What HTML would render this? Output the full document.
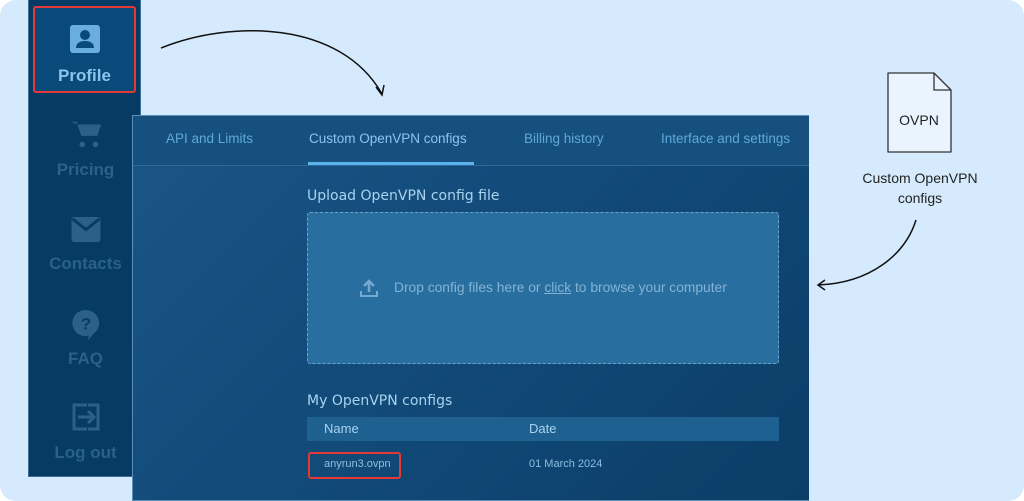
<!DOCTYPE html>
<html><head><meta charset="utf-8"><style>
*{margin:0;padding:0;box-sizing:border-box}
body{width:1024px;height:501px;overflow:hidden;background:#fff;font-family:"Liberation Sans",sans-serif;position:relative}
.bg{position:absolute;left:0;top:0;width:1024px;height:501px;background:#d5ebfd;border-radius:16px}
.side{position:absolute;left:28px;top:0;width:113px;height:477px;background:#053b64;border:1px solid #3b6f95;border-top:none}
.ic{position:absolute;left:0;width:113px}
.ic svg{display:block;margin:0 auto}
.lb{position:absolute;left:0;width:113px;text-align:center;font-weight:bold;font-size:17px;color:#2b6189;line-height:20px}
.prof{position:absolute;left:33px;top:6px;width:103px;height:87px;background:#0a4a7a;border:2px solid #e53935;border-radius:3px}
.panel{position:absolute;left:132px;top:115px;width:677px;height:386px;background:linear-gradient(135deg,#1b5687 0%,#134c7b 40%,#0b3e68 100%);border:1px solid #5d90b8;border-right:none}
.tabs{position:absolute;left:0;top:0;width:676px;height:50px;border-bottom:1px solid #2f6a96;background:#16507f}
.tab{position:absolute;top:15px;font-size:13.5px;color:#5fa8da}
.ul{position:absolute;left:175px;top:46px;width:166px;height:3px;background:#5cb3ec}
.h{position:absolute;color:#a9d3f0;font-family:"DejaVu Sans","Liberation Sans",sans-serif;font-size:14px}
.drop{position:absolute;left:174px;top:96px;width:472px;height:152px;background:#286fa0;border:1px dashed #6ba2c9;border-radius:3px}
.th{position:absolute;left:174px;top:301px;width:472px;height:24px;background:#1e6090}
</style></head><body>
<div class="bg"></div>
<div class="side">
  <div class="ic" style="top:118px"><svg width="34" height="32" viewBox="0 0 36 32"><path d="M2 3h6l5 15h17l4-12H9z" fill="#2b6189"/><circle cx="14" cy="27" r="3" fill="#2b6189"/><circle cx="28" cy="27" r="3" fill="#2b6189"/></svg></div>
  <div class="lb" style="top:160px">Pricing</div>
  <div class="ic" style="top:216px"><svg width="32" height="27" viewBox="0 0 32 28"><rect x="1" y="1" width="30" height="26" rx="3" fill="#2b6189"/><path d="M2 3l14 11 14-11" stroke="#053b64" stroke-width="3" fill="none"/></svg></div>
  <div class="lb" style="top:254px">Contacts</div>
  <div class="ic" style="top:309px"><svg width="28" height="32" viewBox="0 0 30 34"><path d="M15 1a14 14 0 1 0 3 27.5l-1 5 6-7A14 14 0 0 0 15 1z" fill="#2b6189"/><text x="15" y="22" font-size="18" font-weight="bold" fill="#053b64" text-anchor="middle" font-family="Liberation Sans">?</text></svg></div>
  <div class="lb" style="top:349px">FAQ</div>
  <div class="ic" style="top:402px"><svg width="30" height="30" viewBox="0 0 30 30"><path d="M16 3H3v24h13M17 3h10v24H17" stroke="#2b6189" stroke-width="3" fill="none"/><path d="M7 15h15M17 9l6 6-6 6" stroke="#2b6189" stroke-width="3" fill="none"/></svg></div>
  <div class="lb" style="top:443px">Log out</div>
</div>
<div class="prof"><div style="text-align:center;padding-top:17px"><svg width="30" height="28" viewBox="0 0 30 28"><rect x="0" y="0" width="30" height="28" rx="3" fill="#6aaedd"/><circle cx="15" cy="10" r="5" fill="#0a4a7a"/><path d="M6 23c0-5 4-7 9-7s9 2 9 7z" fill="#0a4a7a"/></svg><div style="color:#8cc4ea;font-weight:bold;font-size:17px;margin-top:8px">Profile</div></div></div>
<svg style="position:absolute;left:0;top:0" width="1024" height="501">
<path d="M161 48C230 20 340 20 382 94" stroke="#111" stroke-width="1.5" fill="none"/>
<path d="M376 87l6 8 2-10" stroke="#111" stroke-width="1.5" fill="none"/>
<path d="M916 220C905 255 870 283 818 285" stroke="#111" stroke-width="1.5" fill="none"/>
<path d="M825 280l-7 5 7 5" stroke="#111" stroke-width="1.5" fill="none"/>
<path d="M888 73h46l17 17v62h-63z" fill="#eaf4fe" stroke="#333" stroke-width="1.3" stroke-linejoin="round"/>
<path d="M934 73v17h17" fill="none" stroke="#333" stroke-width="1.3"/>
<text x="919" y="125" font-size="14" fill="#222" text-anchor="middle" font-family="Liberation Sans">OVPN</text>
<text x="920" y="183" font-size="14" fill="#222" text-anchor="middle" font-family="Liberation Sans">Custom OpenVPN</text>
<text x="920" y="203" font-size="14" fill="#222" text-anchor="middle" font-family="Liberation Sans">configs</text>
</svg>
<div class="panel">
  <div class="tabs">
    <div class="tab" style="left:33px">API and Limits</div>
    <div class="tab" style="left:176px;color:#8cc6ee">Custom OpenVPN configs</div>
    <div class="tab" style="left:391px">Billing history</div>
    <div class="tab" style="left:528px">Interface and settings</div>
    <div class="ul"></div>
  </div>
  <div class="h" style="left:174px;top:72px">Upload OpenVPN config file</div>
  <div class="drop">
    <svg style="position:absolute;left:51px;top:65px" width="20" height="20" viewBox="0 0 20 20"><path d="M10 14V3M5 8l5-5 5 5" stroke="#76a9cf" stroke-width="2.5" fill="none"/><path d="M2 13v5h16v-5" stroke="#76a9cf" stroke-width="2" fill="none"/></svg>
    <div style="position:absolute;left:86px;top:67px;font-size:13.8px;color:#83b3d6">Drop config files here or <u>click</u> to browse your computer</div>
  </div>
  <div class="h" style="left:174px;top:277px">My OpenVPN configs</div>
  <div class="th"><span style="position:absolute;left:17px;top:4px;font-size:13px;color:#a9d3f0">Name</span><span style="position:absolute;left:222px;top:4px;font-size:13px;color:#a9d3f0">Date</span></div>
  <div style="position:absolute;left:175px;top:336px;width:93px;height:27px;border:2px solid #e53935;border-radius:3px"></div>
  <div style="position:absolute;left:191px;top:342px;font-size:11px;color:#8fbfe0">anyrun3.ovpn</div>
  <div style="position:absolute;left:396px;top:342px;font-size:11px;color:#8fbfe0">01 March 2024</div>
</div>
</body></html>
